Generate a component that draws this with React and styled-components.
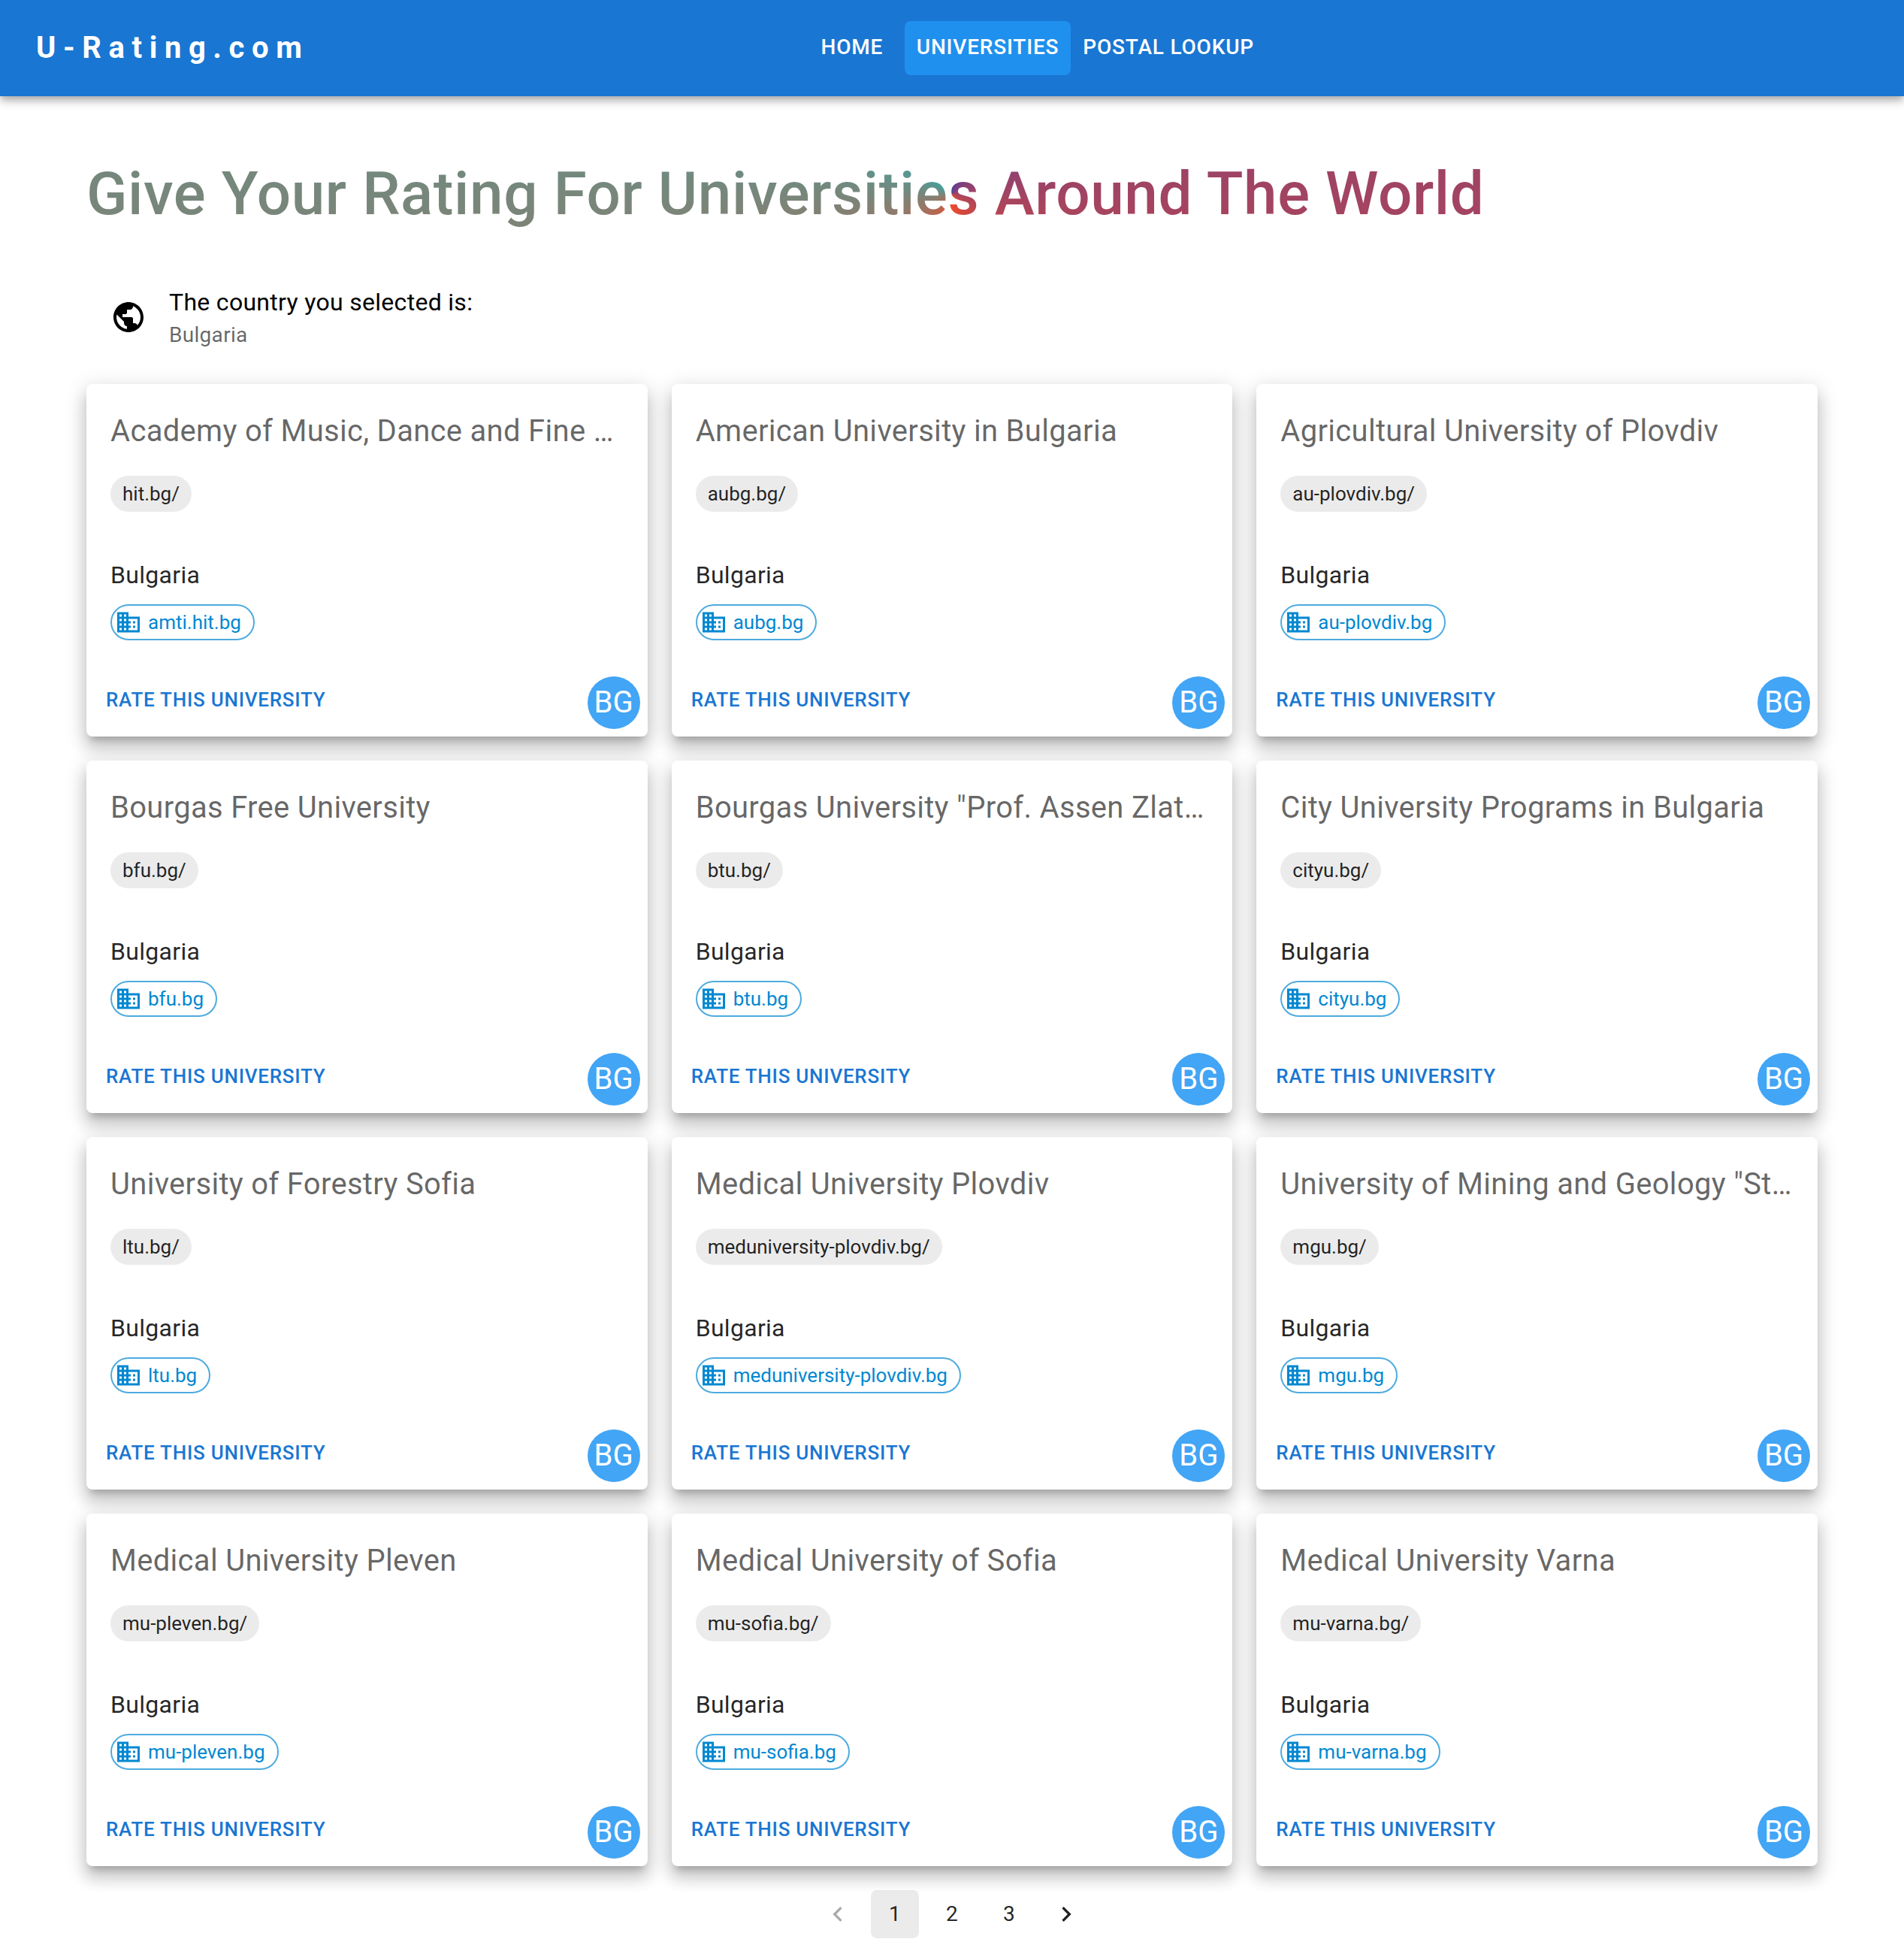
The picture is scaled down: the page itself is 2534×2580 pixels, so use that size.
import React from "react";
import styled, { createGlobalStyle } from "styled-components";
import { MdPublic, MdBusiness, MdNavigateBefore, MdNavigateNext } from "react-icons/md";

const GlobalStyle = createGlobalStyle`
  *, *::before, *::after { box-sizing: border-box; }
  body {
    margin: 0;
    background: #fff;
    color: rgba(0, 0, 0, 0.87);
    font-family: Roboto, "Liberation Sans", sans-serif;
  }
`;

const AppBar = styled.header`
  display: grid;
  grid-template-columns: 5fr 7fr;
  align-items: center;
  min-height: 128px;
  padding: 0 48px;
  background: #1976d2;
  color: #fff;
  box-shadow: 0 4px 8px -2px rgba(0, 0, 0, 0.2), 0 8px 10px rgba(0, 0, 0, 0.14),
    0 2px 20px rgba(0, 0, 0, 0.12);
`;

const Brand = styled.a`
  color: inherit;
  font-size: 40px;
  font-weight: 700;
  line-height: 66px;
  letter-spacing: 0.24em;
  text-decoration: none;
`;

const Nav = styled.nav`
  display: flex;
`;

const NavLink = styled.a`
  display: flex;
  justify-content: center;
  min-width: 140px;
  height: 72px;
  padding: 10px 16px;
  border-radius: 8px;
  background: ${(p) => (p.$active ? "#2090ee" : "transparent")};
  color: inherit;
  font-size: 28px;
  font-weight: 500;
  line-height: 49px;
  letter-spacing: 0.02857em;
  text-decoration: none;
  text-transform: uppercase;
`;

const Container = styled.main`
  max-width: 2400px;
  margin: 0 auto;
  padding: 82px 48px 0;
`;

const Heading = styled.h1`
  margin: 0;
  background: conic-gradient(#553c9a, #ee4b2b, #00c2cb);
  background-clip: text;
  -webkit-background-clip: text;
  color: transparent;
  font-size: 80px;
  font-weight: 500;
  line-height: 96px;
  letter-spacing: 0.0075em;
`;

const Country = styled.section`
  display: flex;
  align-items: center;
  padding: 72px 32px 45px;
  color: #000;
`;

const GlobeIcon = styled(MdPublic)`
  width: 48px;
  height: 48px;
  margin-right: 30px;
`;

const CountryLabel = styled.p`
  margin: 0;
  font-size: 32px;
  line-height: 48px;
  letter-spacing: 0.00938em;
`;

const CountryName = styled.p`
  margin: 0;
  color: rgba(0, 0, 0, 0.6);
  font-size: 28px;
  line-height: 40px;
  letter-spacing: 0.01071em;
`;

const Grid = styled.ul`
  display: grid;
  grid-template-columns: repeat(3, minmax(0, 1fr));
  gap: 32px;
  margin: 0;
  padding: 0;
  list-style: none;
`;

const Card = styled.li`
  border-radius: 8px;
  background: #fff;
  box-shadow: 0 10px 10px -6px rgba(0, 0, 0, 0.2), 0 16px 20px 2px rgba(0, 0, 0, 0.14),
    0 6px 28px 4px rgba(0, 0, 0, 0.12);
`;

const CardBody = styled.div`
  display: flex;
  flex-direction: column;
  align-items: flex-start;
  padding: 30px 32px 38px;
`;

const Title = styled.h2`
  width: 100%;
  margin: 0 0 26px;
  overflow: hidden;
  color: rgba(0, 0, 0, 0.6);
  font-size: 40px;
  font-weight: 400;
  line-height: 66px;
  letter-spacing: 0.0075em;
  text-overflow: ellipsis;
  white-space: nowrap;
`;

const Chip = styled.a`
  display: inline-flex;
  align-items: center;
  height: 48px;
  padding: 0 16px;
  border-radius: 24px;
  border: ${(p) => (p.$outlined ? "2px solid rgba(2, 136, 209, 0.7)" : "0")};
  background: ${(p) => (p.$outlined ? "transparent" : "rgba(0, 0, 0, 0.08)")};
  color: ${(p) => (p.$outlined ? "#0288d1" : "inherit")};
  font-size: 26px;
  line-height: 44px;
  text-decoration: none;
`;

const BuildingIcon = styled(MdBusiness)`
  width: 36px;
  height: 36px;
  margin: 0 8px 0 -12px;
`;

const Place = styled.p`
  margin: 60px 0 15px;
  font-size: 32px;
  line-height: 48px;
  letter-spacing: 0.00938em;
`;

const CardActions = styled.footer`
  display: flex;
  align-items: flex-start;
  justify-content: space-between;
  padding: 10px;
`;

const RateButton = styled.button`
  padding: 8px 16px;
  border: 0;
  border-radius: 8px;
  background: transparent;
  color: #1976d2;
  font-family: inherit;
  font-size: 26px;
  font-weight: 500;
  line-height: 46px;
  letter-spacing: 0.02857em;
  text-transform: uppercase;
`;

const Avatar = styled.span`
  display: flex;
  align-items: center;
  justify-content: center;
  width: 70px;
  height: 70px;
  border-radius: 50%;
  background: #42a5f5;
  color: #fff;
  font-size: 40px;
  line-height: 40px;
`;

const Pagination = styled.nav`
  display: flex;
  justify-content: center;
  gap: 12px;
  padding-top: 32px;
`;

const PageButton = styled.button`
  display: flex;
  align-items: center;
  justify-content: center;
  min-width: 64px;
  height: 64px;
  padding: 0 12px;
  border: 0;
  border-radius: 8px;
  background: ${(p) => (p.$active ? "rgba(0, 0, 0, 0.08)" : "transparent")};
  color: rgba(0, 0, 0, 0.87);
  font-family: inherit;
  font-size: 28px;
  line-height: 40px;
  letter-spacing: 0.01071em;

  &:disabled { opacity: 0.38; }

  svg { width: 40px; height: 40px; }
`;

const links = ["Home", "Universities", "Postal Lookup"];

const universities = [
  ["Academy of Music, Dance and Fine Arts", "hit.bg/", "amti.hit.bg"],
  ["American University in Bulgaria", "aubg.bg/", "aubg.bg"],
  ["Agricultural University of Plovdiv", "au-plovdiv.bg/", "au-plovdiv.bg"],
  ["Bourgas Free University", "bfu.bg/", "bfu.bg"],
  ['Bourgas University "Prof. Assen Zlatarov"', "btu.bg/", "btu.bg"],
  ["City University Programs in Bulgaria", "cityu.bg/", "cityu.bg"],
  ["University of Forestry Sofia", "ltu.bg/", "ltu.bg"],
  ["Medical University Plovdiv", "meduniversity-plovdiv.bg/", "meduniversity-plovdiv.bg"],
  ['University of Mining and Geology "St. Ivan Rils"', "mgu.bg/", "mgu.bg"],
  ["Medical University Pleven", "mu-pleven.bg/", "mu-pleven.bg"],
  ["Medical University of Sofia", "mu-sofia.bg/", "mu-sofia.bg"],
  ["Medical University Varna", "mu-varna.bg/", "mu-varna.bg"],
];

function UniversityCard({ name, site, domain }) {
  return (
    <Card>
      <CardBody>
        <Title>{name}</Title>
        <Chip href="#site">{site}</Chip>
        <Place>Bulgaria</Place>
        <Chip href="#domain" $outlined>
          <BuildingIcon aria-hidden="true" />
          {domain}
        </Chip>
      </CardBody>
      <CardActions>
        <RateButton type="button">Rate this university</RateButton>
        <Avatar>BG</Avatar>
      </CardActions>
    </Card>
  );
}

export default function App() {
  return (
    <>
      <GlobalStyle />
      <AppBar>
        <Brand href="#home">U-Rating.com</Brand>
        <Nav aria-label="Main">
          {links.map((label) => (
            <NavLink key={label} href="#page" $active={label === "Universities"}>
              {label}
            </NavLink>
          ))}
        </Nav>
      </AppBar>
      <Container>
        <Heading>Give Your Rating For Universities Around The World</Heading>
        <Country>
          <GlobeIcon aria-hidden="true" />
          <div>
            <CountryLabel>The country you selected is:</CountryLabel>
            <CountryName>Bulgaria</CountryName>
          </div>
        </Country>
        <Grid>
          {universities.map(([name, site, domain]) => (
            <UniversityCard key={name} name={name} site={site} domain={domain} />
          ))}
        </Grid>
        <Pagination aria-label="Pages">
          <PageButton type="button" disabled aria-label="Previous page">
            <MdNavigateBefore />
          </PageButton>
          <PageButton type="button" $active aria-current="page">1</PageButton>
          <PageButton type="button">2</PageButton>
          <PageButton type="button">3</PageButton>
          <PageButton type="button" aria-label="Next page">
            <MdNavigateNext />
          </PageButton>
        </Pagination>
      </Container>
    </>
  );
}
